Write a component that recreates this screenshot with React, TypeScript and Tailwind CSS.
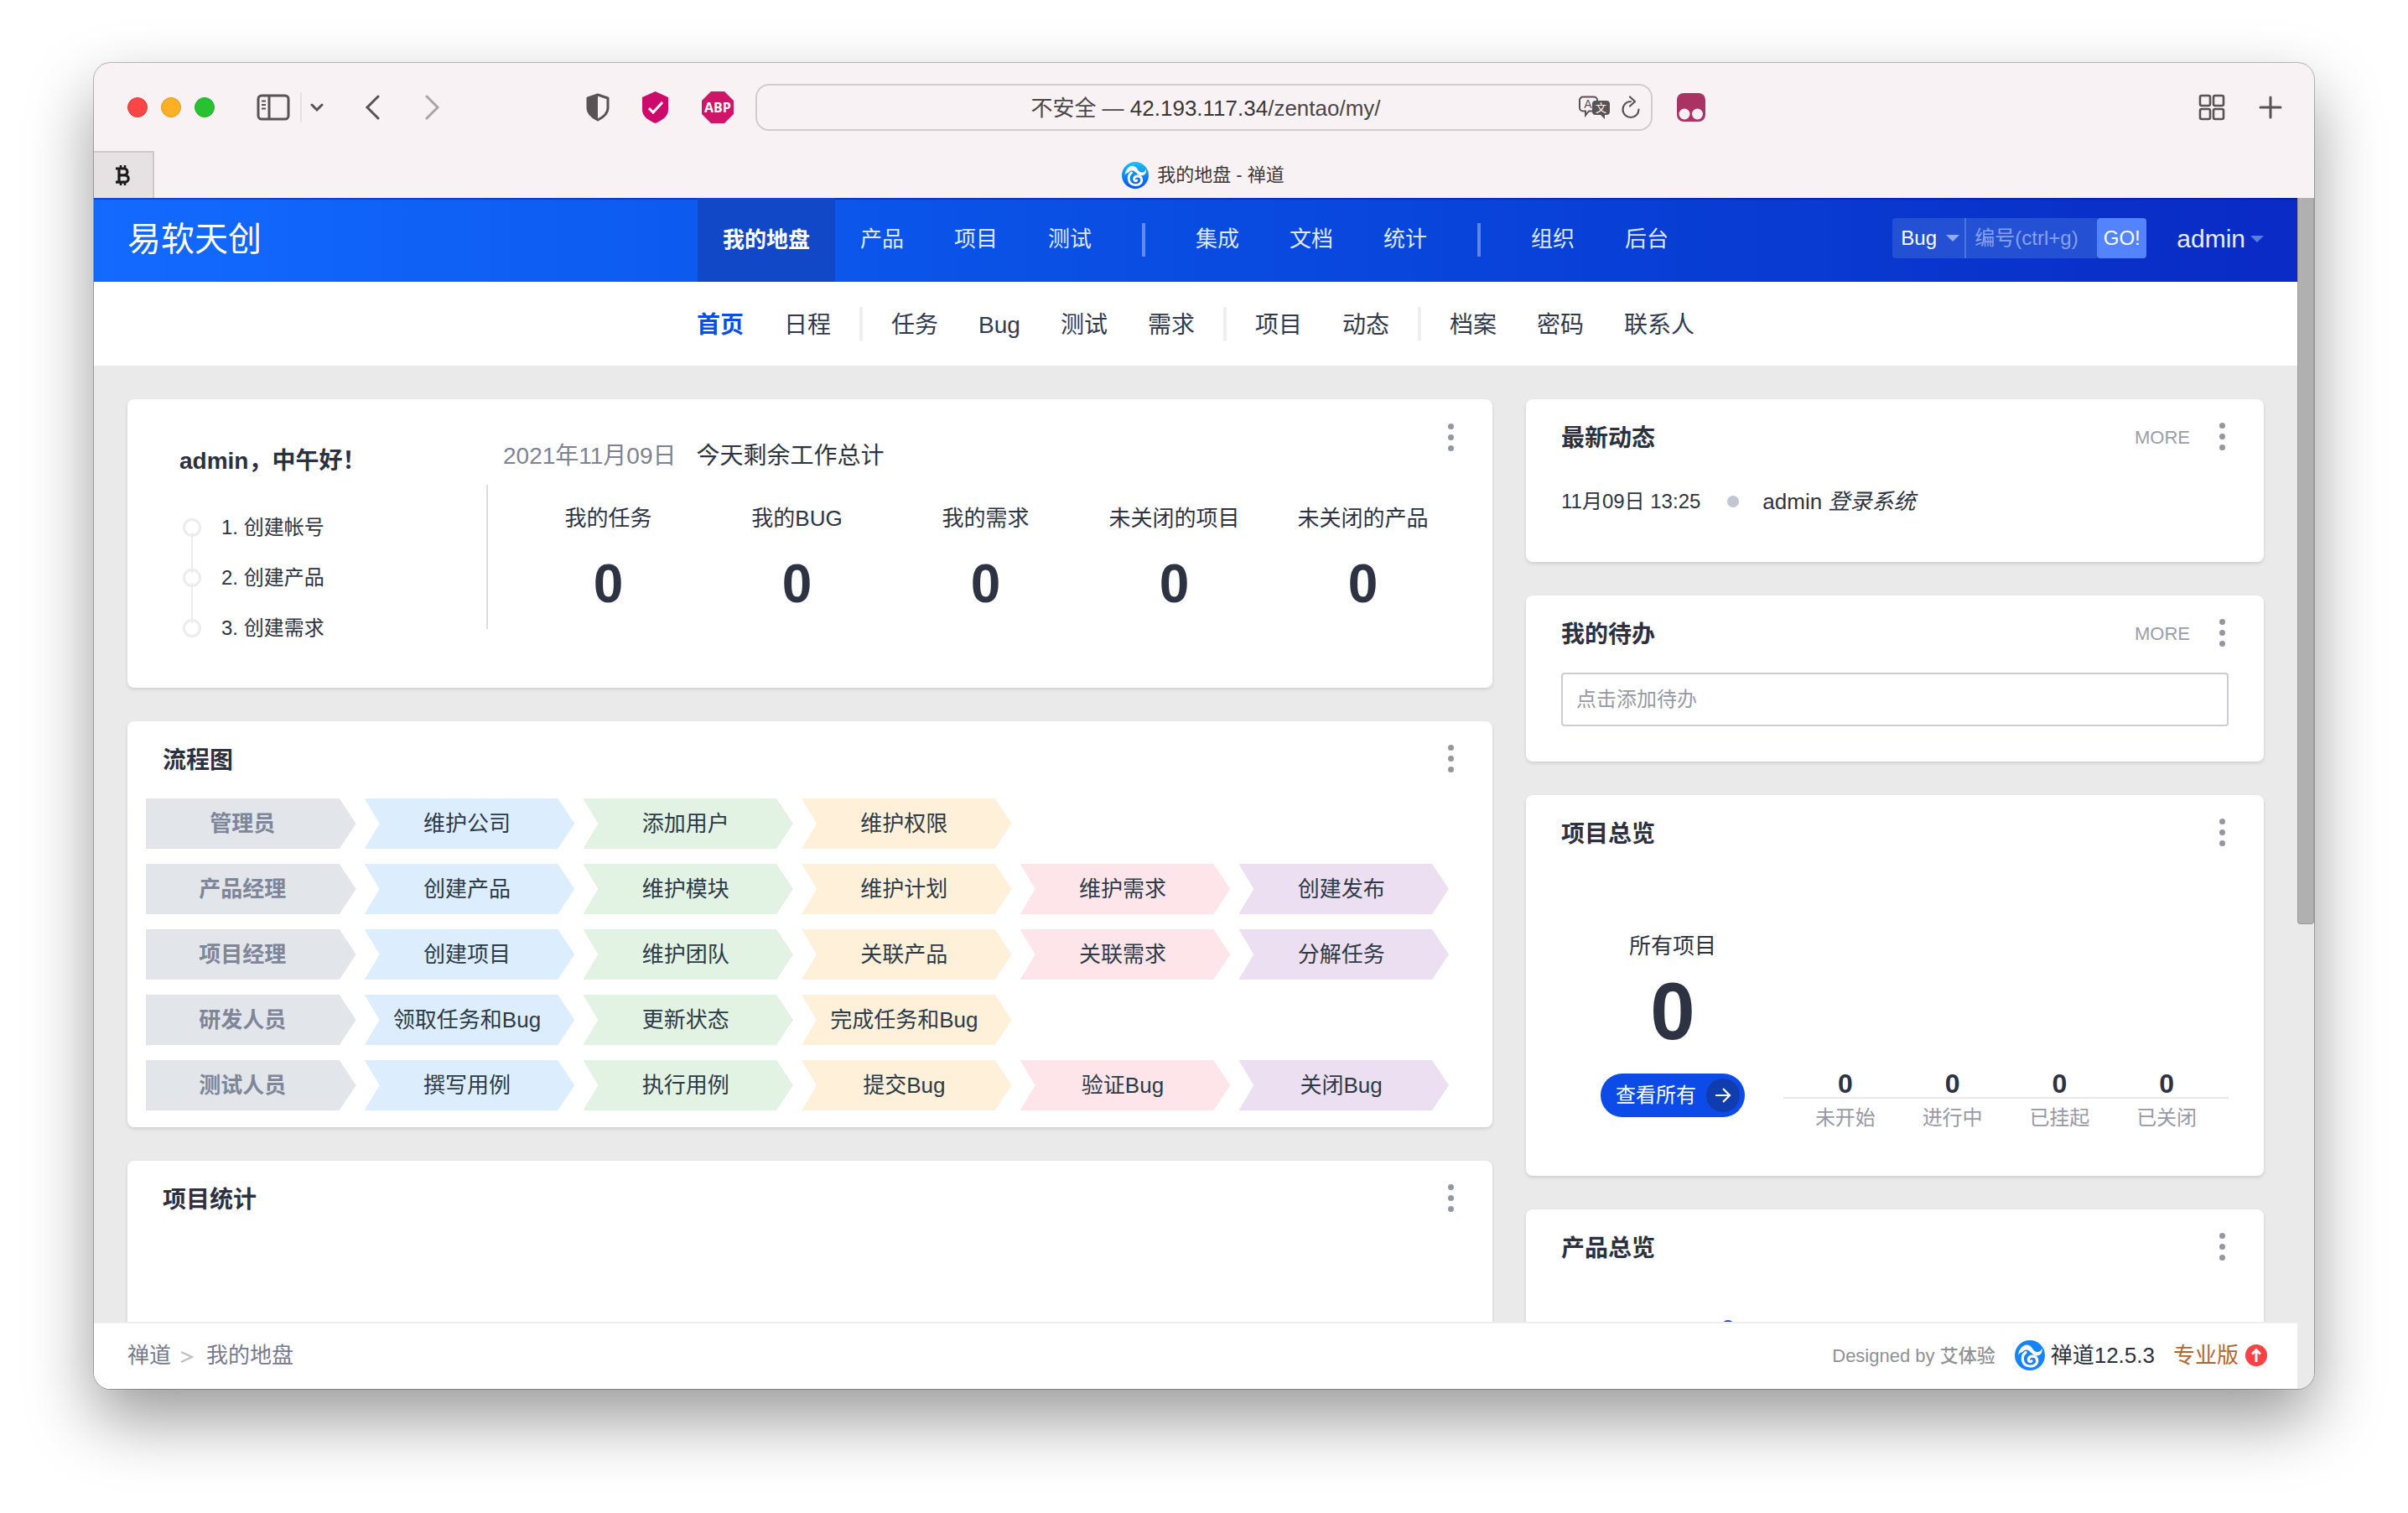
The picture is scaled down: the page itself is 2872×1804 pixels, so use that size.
import type { ReactNode } from 'react'
import clsx from 'clsx'

const mainNav = [
  ['我的地盘', '产品', '项目', '测试'],
  ['集成', '文档', '统计'],
  ['组织', '后台'],
]

const subNav = [
  ['首页', '日程'],
  ['任务', 'Bug', '测试', '需求'],
  ['项目', '动态'],
  ['档案', '密码', '联系人'],
]

const steps = ['创建帐号', '创建产品', '创建需求']

const workStats = [
  { label: '我的任务', value: 0 },
  { label: '我的BUG', value: 0 },
  { label: '我的需求', value: 0 },
  { label: '未关闭的项目', value: 0 },
  { label: '未关闭的产品', value: 0 },
]

const flows = [
  { role: '管理员', items: ['维护公司', '添加用户', '维护权限'] },
  { role: '产品经理', items: ['创建产品', '维护模块', '维护计划', '维护需求', '创建发布'] },
  { role: '项目经理', items: ['创建项目', '维护团队', '关联产品', '关联需求', '分解任务'] },
  { role: '研发人员', items: ['领取任务和Bug', '更新状态', '完成任务和Bug'] },
  { role: '测试人员', items: ['撰写用例', '执行用例', '提交Bug', '验证Bug', '关闭Bug'] },
]

const flowColors = ['bg-[#dceefd]', 'bg-[#e2f2e3]', 'bg-[#fff0d9]', 'bg-[#fee5e9]', 'bg-[#ecdff1]']

const projectStats = [
  { label: '未开始', value: 0 },
  { label: '进行中', value: 0 },
  { label: '已挂起', value: 0 },
  { label: '已关闭', value: 0 },
]

function ZentaoLogo({ className, id }: { className: string; id: string }) {
  return (
    <svg viewBox="0 0 36 36" className={className} aria-hidden="true">
      <defs>
        <linearGradient id={id} x1="0" y1="0" x2="0" y2="1">
          <stop offset="0" stopColor={id === 'tab-logo' ? '#17c3fb' : '#1683fd'} />
          <stop offset="1" stopColor={id === 'tab-logo' ? '#0a4df0' : '#1683fd'} />
        </linearGradient>
      </defs>
      <circle cx="18" cy="18" r="18" fill={`url(#${id})`} />
      <path
        d="M4 18C5 10 10 5 15 5.500C21 6 21 13 26 14C29 14.500 31.500 13 32.500 9.500C33.500 14 31 18.500 26 18.500C21 18.500 18 11 13.500 11.500C10 12 10 14 8 14.500C6 15 5 16 4 18Z"
        fill="#fff"
      />
      <path
        d="M13 14.500C7 19 8 30.500 18 31C24.500 31.200 27.500 27 26.500 23C25.500 18.500 18 17.500 16.500 22C15.700 25 18.500 26.500 20 24.800"
        fill="none"
        stroke="#fff"
        strokeWidth="3.200"
        strokeLinecap="round"
      />
    </svg>
  )
}

function Caret({ className }: { className: string }) {
  return (
    <svg viewBox="0 0 16 8" className={clsx('h-2 w-4', className)} aria-hidden="true">
      <path d="M0 0h16L8 8z" fill="currentColor" />
    </svg>
  )
}

function Toolbar() {
  return (
    <div className="grid h-[105px] shrink-0 grid-cols-[1fr_1070px_1fr] items-center text-[#5a5356]">
      <div className="flex items-center pr-[25px] pl-10">
        <div className="flex gap-4">
          <button aria-label="关闭" className="size-6 rounded-full border border-[#e0383a] bg-[#fc4645]" />
          <button aria-label="最小化" className="size-6 rounded-full border border-[#e09a20] bg-[#fdb024]" />
          <button aria-label="全屏" className="size-6 rounded-full border border-[#1fac29] bg-[#28c231]" />
        </div>
        <button aria-label="侧边栏" className="ml-[50px]">
          <svg viewBox="0 0 40 32" className="h-8 w-10" fill="none" stroke="currentColor" strokeWidth="3">
            <rect x="2" y="2" width="36" height="28" rx="4" />
            <path d="M15 2v28" />
            <path d="M6 8.500h5M6 13h5M6 17.500h5" strokeWidth="2" />
          </svg>
        </button>
        <span className="ml-3 h-9 w-0.5 bg-[#e6dfe2]" />
        <button aria-label="标签页组" className="ml-[10px]">
          <svg viewBox="0 0 16 10" className="h-2.5 w-4" fill="none" stroke="currentColor" strokeWidth="3" strokeLinecap="round">
            <path d="M2 2l6 6 6-6" />
          </svg>
        </button>
        <button aria-label="后退" className="ml-[49px]">
          <svg viewBox="0 0 18 30" className="h-[30px] w-[18px]" fill="none" stroke="currentColor" strokeWidth="3" strokeLinecap="round">
            <path d="M16 2L3 15l13 13" />
          </svg>
        </button>
        <button aria-label="前进" className="ml-[54px] text-[#aaa4a7]">
          <svg viewBox="0 0 18 30" className="h-[30px] w-[18px]" fill="none" stroke="currentColor" strokeWidth="3" strokeLinecap="round">
            <path d="M2 2l13 13L2 28" />
          </svg>
        </button>
        <div className="ml-auto flex items-center gap-[38px]">
          <button aria-label="隐私报告">
            <svg viewBox="0 0 28 34" className="h-[34px] w-7">
              <path d="M14 2L26 6v12c0 6-4 10-12 14C6 28 2 24 2 18V6z" fill="none" stroke="currentColor" strokeWidth="3" strokeLinejoin="round" />
              <path d="M14 2v30C6 28 2 24 2 18V6z" fill="currentColor" />
            </svg>
          </button>
          <button aria-label="安全检查">
            <svg viewBox="0 0 33 38" className="h-[38px] w-[33px]">
              <path d="M16.500 0L32 7v15c0 7-6 12-15.500 16C7 34 1 29 1 22V7z" fill="#cb0a6c" />
              <path d="M9 20l5 5L25 13" fill="none" stroke="#fff" strokeWidth="3" />
            </svg>
          </button>
          <button aria-label="Adblock Plus">
            <svg viewBox="0 0 40 40" className="size-10">
              <path d="M12 1h16l11 11v16L28 39H12L1 28V12z" fill="#cf1568" />
              <text x="20" y="26" textAnchor="middle" fontSize="16" fontWeight="700" fill="#fff" fontFamily="Open Sans, sans-serif">
                ABP
              </text>
            </svg>
          </button>
        </div>
      </div>

      <div className="flex h-14 items-center rounded-2xl border-2 border-[#d2cacd] px-3">
        <span className="w-[78px]" />
        <p className="flex-1 pt-0.5 text-center text-[26px] leading-9 text-[#4c4649]">
          不安全 — <span className="text-[#3b3639]">42.193.117.34</span>/zentao/my/
        </p>
        <button aria-label="翻译">
          <svg viewBox="0 0 38 28" className="h-7 w-[38px]">
            <path d="M5 1.500h13a4 4 0 0 1 4 4v9a4 4 0 0 1-4 4h-6l-4 5v-5H5a4 4 0 0 1-4-4v-9a4 4 0 0 1 4-4z" fill="none" stroke="currentColor" strokeWidth="2" />
            <text x="11" y="15" textAnchor="middle" fontSize="14" fill="currentColor">
              A
            </text>
            <path d="M20 6h13a4 4 0 0 1 4 4v9a4 4 0 0 1-4 4h-2v5l-5-5h-6a4 4 0 0 1-4-4v-9a4 4 0 0 1 4-4z" fill="currentColor" />
            <text x="26.500" y="19" textAnchor="middle" fontSize="13" fill="#fff">
              文
            </text>
          </svg>
        </button>
        <button aria-label="刷新" className="ml-3">
          <svg viewBox="0 0 24 28" className="h-7 w-6" fill="none" stroke="currentColor" strokeWidth="2.200" strokeLinecap="round">
            <path d="M12 7a9.500 9.500 0 1 0 9.500 9.500" />
            <path d="M11 1.500l6 5.500-6 5.500" strokeLinejoin="round" />
          </svg>
        </button>
      </div>

      <div className="flex items-center pr-[38px] pl-[29px]">
        <button aria-label="Tampermonkey">
          <svg viewBox="0 0 34 34" className="size-[34px]">
            <rect width="34" height="34" rx="8" fill="#a93464" />
            <circle cx="9" cy="25" r="6.500" fill="#fbeff4" />
            <circle cx="24.500" cy="25" r="6.500" fill="#fbeff4" />
          </svg>
        </button>
        <button aria-label="标签页概览" className="ml-auto">
          <svg viewBox="0 0 32 32" className="size-8" fill="none" stroke="currentColor" strokeWidth="2.600">
            <rect x="2" y="2" width="12" height="12" rx="2" />
            <rect x="18" y="2" width="12" height="12" rx="2" />
            <rect x="2" y="18" width="12" height="12" rx="2" />
            <rect x="18" y="18" width="12" height="12" rx="2" />
          </svg>
        </button>
        <button aria-label="新建标签页" className="ml-10">
          <svg viewBox="0 0 28 28" className="size-7" stroke="currentColor" strokeWidth="3" strokeLinecap="round">
            <path d="M14 2v24M2 14h24" />
          </svg>
        </button>
      </div>
    </div>
  )
}

function TabBar() {
  return (
    <div className="flex h-14 shrink-0">
      <button aria-label="比特币" className="flex w-[72px] items-center justify-center border-t-2 border-r-2 border-[#cfc8cb] bg-[#e6e2e4]">
        <svg viewBox="0 0 20 26" className="h-[26px] w-5" fill="none" stroke="#1b1b1b" strokeWidth="3.200">
          <path d="M1 5h10a3.800 3.800 0 0 1 0 7.800H5h7a4.200 4.200 0 0 1 0 8.400H1M5 5v16" />
          <path d="M7 1v4M12 1v4M7 21v4M12 21v4" strokeWidth="2.600" />
        </svg>
      </button>
      <div className="flex flex-1 items-center justify-center gap-[10px] pt-0.5 pr-[74px] text-[22px] leading-8 text-[#3d383a]">
        <ZentaoLogo id="tab-logo" className="size-8" />
        我的地盘 - 禅道
      </div>
    </div>
  )
}

function Header() {
  return (
    <header className="grid h-[100px] shrink-0 grid-cols-[1fr_auto_1fr] items-center bg-linear-to-r from-[#136aff] to-[#0a2ac4] px-10 text-white shadow-[inset_0_2px_1px_rgba(0,20,120,0.4)]">
      <h1 className="pb-0.5 text-[40px] leading-[60px]">易软天创</h1>
      <nav className="flex h-full items-center">
        {mainNav.map((group, i) => (
          <div key={i} className="flex h-full items-center">
            {i > 0 && <span className="mx-[30px] h-10 w-1 bg-white/35" />}
            {group.map((name) => (
              <a
                key={name}
                href="#"
                className={clsx(
                  'flex h-full items-center px-[30px] text-[26px] leading-9',
                  name === '我的地盘' ? 'bg-[#1048c8] font-bold' : 'pb-0.5 text-[#dfe9ff]',
                )}
              >
                {name}
              </a>
            ))}
          </div>
        ))}
      </nav>
      <div className="flex items-center justify-end pb-0.5">
        <form className="mb-0.5 flex h-12 text-2xl leading-8" onSubmit={(e) => e.preventDefault()}>
          <div className="relative flex w-[88px] items-center rounded-l-sm border-r-2 border-[#4a74e0] bg-[#2451d4]">
            <select aria-label="搜索类型" className="h-full w-full appearance-none bg-transparent pl-[10px] outline-none">
              <option>Bug</option>
            </select>
            <Caret className="pointer-events-none absolute right-1.5 text-[#90abf3]" />
          </div>
          <input
            aria-label="编号"
            placeholder="编号(ctrl+g)"
            className="w-[156px] bg-[#2451d4] pl-[10px] outline-none placeholder:text-[#86a1ee]"
          />
          <button type="submit" className="w-[59px] rounded-sm bg-[#5484fd]">
            GO!
          </button>
        </form>
        <button className="ml-9 flex items-center gap-1.5 text-[30px] leading-10 text-[#e6edff]">
          admin
          <Caret className="text-[#5c7de0]" />
        </button>
      </div>
    </header>
  )
}

function SubNav() {
  return (
    <nav className="flex h-[100px] shrink-0 items-center justify-center bg-white text-[28px] leading-10 text-[#313a4c]">
      {subNav.map((group, i) => (
        <div key={i} className="flex items-center">
          {i > 0 && <span className="mx-[10px] h-10 w-1 bg-[#eeeeee]" />}
          {group.map((name) => (
            <a key={name} href="#" className={clsx('px-6 pt-[3px]', name === '首页' && 'font-bold text-[#0c4ce6]')}>
              {name}
            </a>
          ))}
        </div>
      ))}
    </nav>
  )
}

function MoreMenu() {
  return (
    <button aria-label="更多操作" className="flex w-7 flex-col items-center gap-1.5">
      <span className="size-[7px] rounded-full bg-[#9497a1]" />
      <span className="size-[7px] rounded-full bg-[#9497a1]" />
      <span className="size-[7px] rounded-full bg-[#9497a1]" />
    </button>
  )
}

function Card({ title, more, className, children }: { title?: string; more?: boolean; className: string; children?: ReactNode }) {
  return (
    <section className={clsx('shrink-0 rounded-lg bg-white shadow-[0_2px_4px_rgba(0,0,0,0.12)]', className)}>
      {title && (
        <div className="flex h-[92px] items-center pr-9 pb-1 pl-[42px]">
          <h2 className="flex-1 pt-[6px] text-[28px] leading-10 font-bold text-[#2d3040]">{title}</h2>
          {more && (
            <a href="#" className="mr-6 pt-1 text-[22px] leading-8 text-[#9a9da8]">
              MORE
            </a>
          )}
          <MoreMenu />
        </div>
      )}
      {children}
    </section>
  )
}

function WelcomeCard() {
  return (
    <Card className="flex h-[344px]">
      <div className="w-[428px] pt-[54px] pl-[62px]">
        <h2 className="text-[28px] leading-10 font-bold text-[#2d3040]">admin，中午好！</h2>
        <ol className="mt-[29px] text-2xl text-[#2d3342]">
          {steps.map((step, i) => (
            <li key={step} className="flex h-[60px] items-center gap-6">
              <span className="relative ml-1 size-[22px] rounded-full border-3 border-[#ececec]">
                {i < 2 && <span className="absolute top-[14px] left-[7px] h-12 w-0.5 bg-[#ececec]" />}
              </span>
              <span>
                {i + 1}. {step}
              </span>
            </li>
          ))}
        </ol>
      </div>
      <span className="mt-[102px] h-[172px] w-0.5 bg-[#dcdcdc]" />
      <div className="flex-1 pt-12">
        <p className="flex gap-6 pl-[18px] text-[28px] leading-10 text-[#2d3342]">
          <span className="text-[#7d8294]">2021年11月09日</span>
          <span>今天剩余工作总计</span>
        </p>
        <dl className="mt-9 -mr-[22px] grid grid-cols-5 pl-[31px]">
          {workStats.map((stat) => (
            <div key={stat.label} className="flex flex-col items-center text-[#2d3342]">
              <dt className="text-[26px] leading-9">{stat.label}</dt>
              <dd className="mt-5 text-[64px] leading-[80px] font-bold">{stat.value}</dd>
            </div>
          ))}
        </dl>
      </div>
      <div className="mt-[29px] mr-9">
        <MoreMenu />
      </div>
    </Card>
  )
}

function FlowCard() {
  return (
    <Card title="流程图" className="pb-5">
      <div className="flex flex-col gap-[18px] pr-[52px] pl-[22px]">
        {flows.map((flow) => (
          <div key={flow.role} className="grid h-[60px] grid-cols-6 gap-[10px] text-[26px]">
            <div className="flex items-center justify-center bg-[#e2e5ea] pr-5 font-bold text-[#7f8699] [clip-path:polygon(0_0,calc(100%-20px)_0,100%_50%,calc(100%-20px)_100%,0_100%)]">
              {flow.role}
            </div>
            {flow.items.map((item, i) => (
              <a
                key={item}
                href="#"
                className={clsx(
                  'flex items-center justify-center pr-1.5 whitespace-nowrap text-[#2d3a48] [clip-path:polygon(0_0,calc(100%-20px)_0,100%_50%,calc(100%-20px)_100%,0_100%,18px_50%)]',
                  flowColors[i],
                )}
              >
                {item}
              </a>
            ))}
          </div>
        ))}
      </div>
    </Card>
  )
}

function ProjectOverview() {
  return (
    <Card title="项目总览" className="h-[454px]">
      <div className="flex items-end pr-[42px] pl-[89px]">
        <div className="flex w-[172px] flex-col items-center pt-[70px] text-[#2d3342]">
          <span className="text-[26px] leading-9">所有项目</span>
          <span className="mt-1 text-[96px] leading-[112px] font-bold">0</span>
          <a href="#" className="mt-[18px] flex h-[52px] w-full items-center justify-between rounded-full bg-[#0c4be8] pr-1.5 pl-[18px] text-2xl text-white">
            查看所有
            <span className="flex size-10 items-center justify-center rounded-full bg-[#113cae]">
              <svg viewBox="0 0 20 20" className="size-5" fill="none" stroke="currentColor" strokeWidth="2.200">
                <path d="M1 10h17M10 2l8 8-8 8" />
              </svg>
            </span>
          </a>
        </div>
        <dl className="mb-[-18px] ml-[46px] flex-1">
          <div className="grid grid-cols-4 border-b-2 border-[#e8e8e8] px-[10px]">
            {projectStats.map((stat) => (
              <dd key={stat.label} className="text-center text-[32px] leading-8 font-bold text-[#2d3342]">
                {stat.value}
              </dd>
            ))}
          </div>
          <div className="grid grid-cols-4 px-[10px] pt-1.5">
            {projectStats.map((stat) => (
              <dt key={stat.label} className="text-center text-2xl leading-[34px] text-[#9799a6]">
                {stat.label}
              </dt>
            ))}
          </div>
        </dl>
      </div>
    </Card>
  )
}

function Footer() {
  return (
    <footer className="flex h-20 shrink-0 items-center border-t-2 border-[#eeeeee] bg-white pr-9 pb-[3px] pl-10 text-[26px] leading-9">
      <div className="flex flex-1 items-center text-[#757a90]">
        <a href="#">禅道</a>
        <svg viewBox="0 0 16 16" className="mt-1 mr-[15px] ml-[11px] size-4" fill="none" stroke="#bdbdbd" strokeWidth="2">
          <path d="M1 2l13 6-13 6" />
        </svg>
        <a href="#">我的地盘</a>
      </div>
      <span className="pt-0.5 text-[22px] text-[#8f9195]">
        Designed by <span className="font-medium">艾体验</span>
      </span>
      <ZentaoLogo id="footer-logo" className="ml-[23px] size-9" />
      <span className="ml-[7px] text-[#2d3040]">禅道12.5.3</span>
      <a href="#" className="ml-[22px] flex items-center gap-2 text-[#b0672f]">
        专业版
        <svg viewBox="0 0 26 26" className="size-[26px]" fill="none" stroke="#fff" strokeWidth="3">
          <circle cx="13" cy="13" r="13" fill="#fb4145" stroke="none" />
          <path d="M13 21V7M8 11.500l5-5 5 5" />
        </svg>
      </a>
    </footer>
  )
}

export default function App() {
  return (
    <div className="h-screen overflow-hidden bg-white px-28 pt-[75px] pb-[148px] font-['Liberation_Sans','Noto_Sans_CJK_SC',sans-serif]">
      <div className="flex h-full flex-col overflow-hidden rounded-[20px] bg-[#f8f2f4] shadow-[0_0_0_1px_rgba(0,0,0,0.25),0_36px_80px_rgba(0,0,0,0.4)]">
        <Toolbar />
        <TabBar />
        <div className="flex min-h-0 flex-1 bg-[#eaeaea]">
          <div className="flex min-w-0 flex-1 flex-col">
            <Header />
            <SubNav />
            <main className="grid min-h-0 flex-1 grid-cols-[1628fr_880fr] gap-10 overflow-hidden p-10">
              <div className="flex min-h-0 flex-col gap-10">
                <WelcomeCard />
                <FlowCard />
                <Card title="项目统计" className="h-[400px]" />
              </div>
              <div className="flex min-h-0 flex-col gap-10">
                <Card title="最新动态" more className="h-[194px]">
                  <div className="flex items-center pt-3 pl-[42px] text-[26px] leading-9 text-[#2d3342]">
                    <time className="text-2xl">11月09日 13:25</time>
                    <span className="mr-7 ml-8 size-[14px] rounded-full bg-[#c2c5d2]" />
                    <span>
                      admin <em>登录系统</em>
                    </span>
                  </div>
                </Card>
                <Card title="我的待办" more className="pb-[42px]">
                  <div className="flex px-[42px]">
                    <input
                      aria-label="添加待办"
                      placeholder="点击添加待办"
                      className="h-16 w-full rounded-sm border-2 border-[#cccdd0] px-4 text-2xl outline-none placeholder:text-[#979aa6]"
                    />
                  </div>
                </Card>
                <ProjectOverview />
                <Card title="产品总览" className="h-[454px]">
                  <div className="pt-10 pl-[233px]">
                    <span className="block size-4 rounded-full bg-[#0c4be8]" />
                  </div>
                </Card>
              </div>
            </main>
            <Footer />
          </div>
          <div className="w-5">
            <div className="h-[866px] rounded-b-sm border-x border-b border-[#9c9c9c] bg-[#b0b0b0]" />
          </div>
        </div>
      </div>
    </div>
  )
}
